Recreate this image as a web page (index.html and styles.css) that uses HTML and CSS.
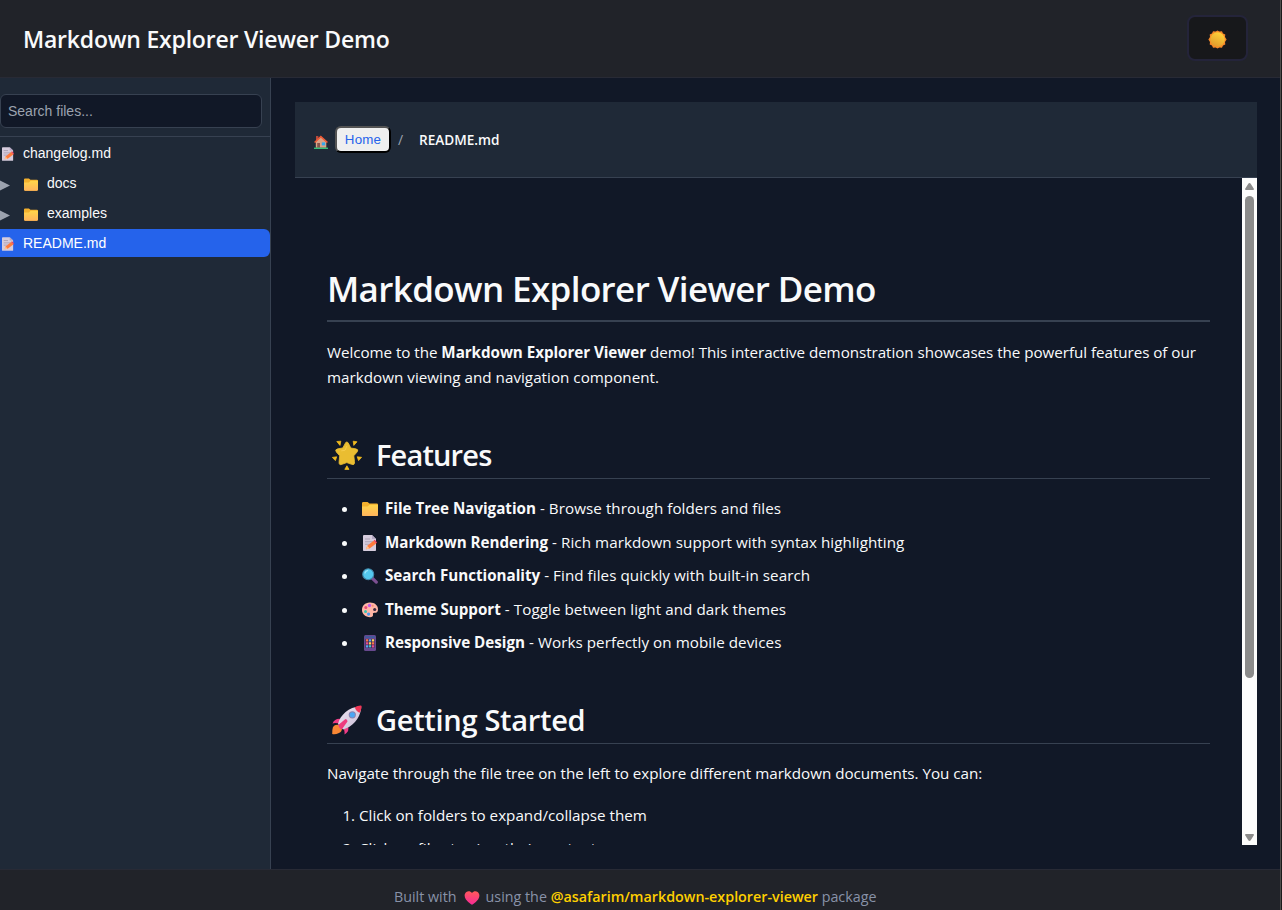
FILE: index.html
```html
<!DOCTYPE html>
<html lang="en">
<head>
<meta charset="utf-8">
<title>Markdown Explorer Viewer Demo</title>
<link rel="stylesheet" href="styles.css">
</head>
<body>
<svg class="defs" width="0" height="0" aria-hidden="true">
  <defs>
    <linearGradient id="gold" x1="0" y1="0" x2="0" y2="1"><stop offset="0" stop-color="#ffd54a"/><stop offset="1" stop-color="#ffb45c"/></linearGradient>
    <linearGradient id="sunfill" x1="0.8" y1="0" x2="0.3" y2="1"><stop offset="0" stop-color="#ffd63a"/><stop offset="1" stop-color="#e09a2c"/></linearGradient>
    <linearGradient id="heartfill" x1="0.6" y1="0" x2="0.5" y2="1"><stop offset="0" stop-color="#ff5a5a"/><stop offset="1" stop-color="#f52a96"/></linearGradient>
    <linearGradient id="hull" x1="0" y1="0" x2="1" y2="1"><stop offset="0" stop-color="#f0e6f2"/><stop offset="1" stop-color="#c8bcd6"/></linearGradient>
    <symbol id="folder" viewBox="0 0 16 14"><path d="M0 1.2Q0 0 1.2 0H5.6L7.4 1.6H14.8Q16 1.6 16 2.8V12.8Q16 14 14.8 14H1.2Q0 14 0 12.8Z" fill="#f3b02e"/><path d="M0 4.6H5.6L7.6 2.8H16V12.8Q16 14 14.8 14H1.2Q0 14 0 12.8Z" fill="url(#gold)"/></symbol>
    <symbol id="memo" viewBox="0 0 14 16"><path d="M1 0H9L13 4V15.2Q13 16 12.2 16H.8Q0 16 0 15.2V1Q0 0 1 0Z" fill="#d6ccdd"/><path d="M9 0V4H13Z" fill="#b5a8c3"/><path d="M2 4H7M2 6.7H10M2 9.3H8" stroke="#aca2b5" stroke-width="1.1"/><path d="M3 14.2L4.3 10.8L10.6 5.7L13.2 8.6L6.6 13.5Z" fill="#ff7b3d"/><path d="M10.6 5.7L11.8 4.8L14 7.6L13.2 8.6Z" fill="#ef3c57"/><path d="M3 14.2L4.3 10.8L6.6 13.5Z" fill="#ffc28f"/></symbol>
    <symbol id="house" viewBox="0 0 14 14"><path d="M2 1H4.4V5H2Z" fill="#b84a3c"/><path d="M1.8 6.2L7 1.8L12.3 6.2V12.8H1.8Z" fill="#d9a487"/><path d="M0 7L6.8 .4L14 7L12.8 8L6.8 2.8L1.2 8Z" fill="#ee5a36"/><path d="M3.2 8H6V12.8H3.2Z" fill="#85544c"/><path d="M7.8 7.4H11.2V10.4H7.8Z" fill="#30a8ef"/><path d="M0 12.6H14V14H0Z" fill="#36bf78"/></symbol>
    <symbol id="glow" viewBox="0 0 30 30"><path d="M14.8 2Q16 2 16.8 4L18.8 8L23.7 8.8Q27.2 9.5 25.1 12L21.8 15.8L22.5 21.5Q23 25.6 19.5 24.3L14.8 22.6L10 24.3Q6.7 25.6 7.1 21.8L7.7 15.8L4.3 12Q2.5 9.5 5.8 8.8L10.7 8L12.9 4Q13.6 2 14.8 2Z" fill="#eabd31" stroke="#eabd31" stroke-width=".8" stroke-linejoin="round"/><path d="M4.8 1.5L8.8 1.2L8 5.4ZM21.2 1.2L25 1.8L21.8 5.4ZM.4 17.4L4.7 16.8L3.4 20.6ZM25.2 16.8L29.6 17.3L26.6 20.6ZM14.9 25.8L17 29.4L12.8 29.4Z" fill="#efb91e" stroke="#efb91e" stroke-width=".8" stroke-linejoin="round"/><path d="M9.6 10.8L13 10.3L14.8 6.2" fill="none" stroke="#f6cc4c" stroke-linecap="round"/></symbol>
    <symbol id="lens" viewBox="0 0 16 16"><path d="M9 9L14.3 14.1" stroke="#7b4f91" stroke-width="3.2" stroke-linecap="round"/><circle cx="6.2" cy="6.2" r="5.5" fill="#54c9ee" stroke="#428aac" stroke-width="1.1"/><path d="M3 5Q3.8 3 5.6 2.7" fill="none" stroke="#9de7fa" stroke-width="1.3" stroke-linecap="round"/></symbol>
    <symbol id="palette" viewBox="0 0 16 16"><path d="M7.6 .6C12.5 .4 16 3.4 16 7.2C16 10.7 13.8 11 12.2 10.8Q10.3 10.8 11 12.6C11.5 14.1 10 15.3 8 15.3C3.5 15 0 12 0 8C0 4 3 .8 7.6 .6Z" fill="#ffb5a5"/><circle cx="12.7" cy="7.5" r="1.6" fill="#3c2b43"/><circle cx="7.5" cy="3.5" r="1.7" fill="#c45be8"/><circle cx="3.8" cy="5.5" r="1.5" fill="#ec4b76"/><circle cx="3.5" cy="9.4" r="1.5" fill="#36c4b0"/><circle cx="6.6" cy="12.1" r="1.6" fill="#489af2"/><circle cx="10.7" cy="3.8" r="1" fill="#ff8b6b"/></symbol>
    <symbol id="phone" viewBox="0 0 13 16"><rect x=".5" width="12" height="16" rx="1.5" fill="#67488e"/><path d="M1.5 1H11.5V3H1.5Z" fill="#45599b"/><path d="M2 4H11V13H2Z" fill="#392955"/><path d="M2.5 4.2H4.7V6.4H2.5ZM8.4 7.2H10.6V9.4H8.4Z" fill="#ff7548"/><path d="M5.4 4.2H7.6V6.4H5.4ZM2.5 10.2H4.7V12.4H2.5Z" fill="#5aa8f4"/><path d="M8.4 4.2H10.6V6.4H8.4ZM5.4 7.2H7.6V9.4H5.4Z" fill="#ffd15a"/><path d="M2.5 7.2H4.7V9.4H2.5ZM8.4 10.2H10.6V12.4H8.4Z" fill="#e64f91"/><path d="M5.4 10.2H7.6V12.4H5.4Z" fill="#42c6c5"/></symbol>
    <symbol id="rocket" viewBox="0 0 30 30"><path d="M1 22Q3 19 7 20L10 23Q10 27 7 28Q3 30 .2 29Q0 25 1 22Z" fill="#f98734"/><path d="M9 14Q3 13 .5 18.4Q5 17.5 8 19.5ZM16 21Q18 26 12.5 29.5Q13 25 10.5 22.5Z" fill="#ef3c85"/><path d="M6 19C8 10 17 2 28 1.2Q29.5 1 29.2 3C28 14 20 22 11 24.5Z" fill="url(#hull)"/><path d="M22.8 2.3Q25.6 .8 28.7 .5Q30 .4 29.6 2Q29.2 5 27.8 7.7Q24 6.6 22.8 2.3Z" fill="#ef3656"/><circle cx="20.3" cy="9.8" r="3.6" fill="#8b82ad"/><circle cx="20.3" cy="9.8" r="2.6" fill="#4ba6f3"/><path d="M13.5 14Q15.5 14 15.5 16.5L9.6 24.7Q7 23 6.2 20Z" fill="#ed3a7d"/></symbol>
    <symbol id="sun" viewBox="0 0 20 20"><path d="M10 .4L12 1.7L14.7 1.3L15.8 3.6L18.2 4.8L17.9 7.4L19.6 10L17.9 12.5L18.2 15.2L15.8 16.2L14.7 18.6L12 18.3L10 19.6L8 18.3L5.3 18.6L4.2 16.2L1.8 15.2L2.1 12.5L.4 10L2.1 7.4L1.8 4.8L4.2 3.6L5.3 1.3L8 1.7Z" fill="#f78a28"/><circle cx="10" cy="10" r="7.6" fill="url(#sunfill)"/></symbol>
    <symbol id="heart" viewBox="0 0 16 15"><path d="M8 2.2C9.5 0 12.2-.2 14 1C16.5 2.8 16.4 6.5 14.5 9Q12.2 12 9 14.3Q8 15 7 14.3Q3.8 12 1.5 9C-.4 6.5-.5 2.8 2 1C3.8-.2 6.5 0 8 2.2Z" fill="url(#heartfill)"/></symbol>
  </defs>
</svg>
<div class="app">
  <header class="topbar">
    <h1 class="brand">Markdown Explorer Viewer Demo</h1>
    <button class="theme" aria-label="Toggle theme"><svg class="i-sun"><use href="#sun"/></svg></button>
  </header>
  <div class="body">
    <aside class="sidebar">
      <div class="search"><input class="search-input" type="text" placeholder="Search files..."></div>
      <div class="tree">
        <div class="row"><svg class="i-file"><use href="#memo"/></svg><span>changelog.md</span></div>
        <div class="row"><svg class="arrow" viewBox="0 0 10 10"><path d="M0 0L10 5L0 10Z"/></svg><svg class="i-dir"><use href="#folder"/></svg><span>docs</span></div>
        <div class="row"><svg class="arrow" viewBox="0 0 10 10"><path d="M0 0L10 5L0 10Z"/></svg><svg class="i-dir"><use href="#folder"/></svg><span>examples</span></div>
        <div class="row active"><svg class="i-file"><use href="#memo"/></svg><span>README.md</span></div>
      </div>
    </aside>
    <main class="main">
      <nav class="crumbs"><svg class="i-house"><use href="#house"/></svg><button class="home">Home</button><span class="sep">/</span><span class="current">README.md</span></nav>
      <div class="viewer">
        <article class="doc">
          <h1 class="title">Markdown Explorer Viewer Demo</h1>
          <p class="para intro">Welcome to the <strong>Markdown Explorer Viewer</strong> demo! This interactive demonstration showcases the powerful features of our<br><span class="line2">markdown viewing and navigation component.</span></p>
          <h2 class="section"><svg class="i-big"><use href="#glow"/></svg><span class="tight">Features</span></h2>
          <ul class="features">
            <li><svg class="i-li short"><use href="#folder"/></svg><strong>File Tree Navigation</strong> - Browse through folders and files</li>
            <li><svg class="i-li"><use href="#memo"/></svg><strong>Markdown Rendering</strong> - Rich markdown support with syntax highlighting</li>
            <li><svg class="i-li"><use href="#lens"/></svg><strong>Search Functionality</strong> - Find files quickly with built-in search</li>
            <li><svg class="i-li"><use href="#palette"/></svg><strong>Theme Support</strong> - Toggle between light and dark themes</li>
            <li><svg class="i-li"><use href="#phone"/></svg><strong>Responsive Design</strong> - Works perfectly on mobile devices</li>
          </ul>
          <h2 class="section second"><svg class="i-big"><use href="#rocket"/></svg><span>Getting Started</span></h2>
          <p class="para">Navigate through the file tree on the left to explore different markdown documents. You can:</p>
          <ol class="steps">
            <li>Click on folders to expand/collapse them</li>
            <li>Click on files to view their contents</li>
          </ol>
        </article>
        <div class="scrollbar">
          <svg class="sb-arrow" viewBox="0 0 9 7"><path d="M4.5 0Q5.2 0 5.7 .8L9 6Q9 7 8 7H1Q0 7 0 6L3.3 .8Q3.8 0 4.5 0Z"/></svg>
          <div class="thumb"></div>
          <svg class="sb-arrow down" viewBox="0 0 9 7"><path d="M4.5 0Q5.2 0 5.7 .8L9 6Q9 7 8 7H1Q0 7 0 6L3.3 .8Q3.8 0 4.5 0Z"/></svg>
        </div>
      </div>
    </main>
  </div>
  <footer class="footer"><span>Built with</span><svg class="i-heart"><use href="#heart"/></svg><span>using the <a class="link">@asafarim/markdown-explorer-viewer</a> package</span></footer>
</div>
<div class="edge"></div>
</body>
</html>
```
FILE: styles.css
```css
* { box-sizing: border-box; }
body { margin: 0; display: flex; width: 1282px; height: 910px; overflow: hidden; background: #111827; font-family: "Open Sans", "Noto Sans", sans-serif; color: #f9fafb; }
svg { display: block; flex: none; }
.defs { position: absolute; }
.app { width: 1280px; height: 910px; display: flex; flex-direction: column; }
.edge { width: 2px; background: #1b1b1b; border-left: 1px solid #4e4d4b; }

.topbar { height: 78px; flex: none; display: flex; align-items: center; justify-content: space-between; padding: 0 32px 0 23px; background: #212329; border-bottom: 1px solid #282a35; }
.brand { margin: 0 0 -1px; font-size: 23px; font-weight: 600; line-height: 32px; letter-spacing: -0.21px; }
.theme { width: 61px; height: 46px; margin-top: -1px; padding: 0 1px 0 0; display: flex; align-items: center; justify-content: center; background: #17181b; border: 2px solid #24243a; border-radius: 8px; }
.i-sun { width: 19px; height: 19px; margin-top: 2px; }

.body { height: 791px; flex: none; display: flex; }
.sidebar { width: 271px; flex: none; background: #1f2937; border-right: 1px solid #374151; font-family: "Liberation Sans", Arial, sans-serif; font-size: 14px; }
.search { height: 59px; padding: 16px 8px 8px 0; border-bottom: 1px solid #374151; }
.search-input { display: block; width: 262px; height: 34px; padding: 0 8px 0 7px; background: #111827; border: 1px solid #374151; border-radius: 6px; font: 14px "Liberation Sans", Arial, sans-serif; color: #f9fafb; }
.search-input::placeholder { color: #9ca3af; opacity: 1; }
.tree { display: flex; flex-direction: column; gap: 2px; padding-top: 2px; }
.row { height: 28px; display: flex; align-items: center; border-radius: 0 6px 6px 0; line-height: 28px; }
.row.active { background: #2563eb; color: #fff; }
.i-file { width: 12px; height: 14px; margin: 2px 9px 0 2px; }
.arrow { width: 10px; height: 11px; margin: 4px 14px 0 0; fill: #9ca3af; }
.i-dir { width: 14px; height: 13px; margin: 3px 9px 0 0; }

.main { flex: 1; padding: 24px 23px 24px 24px; display: flex; flex-direction: column; }
.crumbs { height: 76px; flex: none; display: flex; align-items: center; padding-left: 19px; background: #1f2937; border-bottom: 1px solid #374151; font-size: 14px; }
.i-house { width: 14px; height: 14px; margin: 5px 7px 0 0; }
.home { width: 56px; height: 27px; padding: 0; background: #efefef; border: 2px outset #000; border-radius: 6px; color: #2563eb; font: 13.33px "Liberation Sans", Arial, sans-serif; letter-spacing: 0.2px; }
.sep { margin-left: 7px; width: 21px; color: #9ca3af; }
.current { font-size: 13.6px; font-weight: 600; }
.viewer { flex: 1; min-height: 0; display: flex; overflow: hidden; }
.doc { flex: 1; padding: 87px 32px 0; overflow: hidden; font-size: 15.2px; line-height: 25.6px; }
.title { margin: 0; padding-bottom: 7px; border-bottom: 2px solid #374151; font-size: 35px; font-weight: 600; line-height: 48px; letter-spacing: -0.63px; }
.para { margin: 17px 0 0; white-space: nowrap; letter-spacing: -0.02px; }
.intro { margin: 18px 0 45px; line-height: 25px; letter-spacing: -0.045px; }
.line2 { letter-spacing: 0.02px; }
.section { margin: 45px 0 0; padding-bottom: 3px; border-bottom: 1px solid #374151; display: flex; align-items: center; gap: 14px; font-size: 29px; font-weight: 600; line-height: 40px; letter-spacing: -0.3px; }
.section.second { margin-top: 44px; }
.tight { letter-spacing: -0.85px; }
.i-big { width: 30px; height: 30px; margin-left: 5px; }
.features, .steps { margin: 17px 0 0; padding-left: 32px; letter-spacing: 0.06px; }
.features strong { letter-spacing: -0.02px; }
.steps { margin-top: 16px; letter-spacing: 0; }
.features li, .steps li { margin-bottom: 8px; }
.features li:last-child { margin-bottom: 0; }
.i-li { display: inline-block; width: 16px; height: 16px; margin: 0 7px 0 3px; vertical-align: -3px; }
.i-li.short { height: 14px; vertical-align: -2px; }
.scrollbar { width: 15px; flex: none; display: flex; flex-direction: column; align-items: center; padding: 5px 0 4px; background: #fcfcfc; }
.thumb { width: 9px; height: 482px; margin: 6px 0 auto; border-radius: 5px; background: #8b8b8b; }
.sb-arrow { width: 9px; height: 7px; fill: #8b8b8b; }
.sb-arrow.down { transform: rotate(180deg); }

.footer { height: 41px; flex: none; display: flex; align-items: flex-start; padding: 14px 0 0 394px; background: #212329; border-top: 1px solid #282a35; color: #8892a8; font-size: 14.3px; line-height: 26px; white-space: nowrap; }
.i-heart { width: 16px; height: 14px; margin: 7px 6px 0 7px; }
.link { color: #ffd000; font-weight: 600; }
```
